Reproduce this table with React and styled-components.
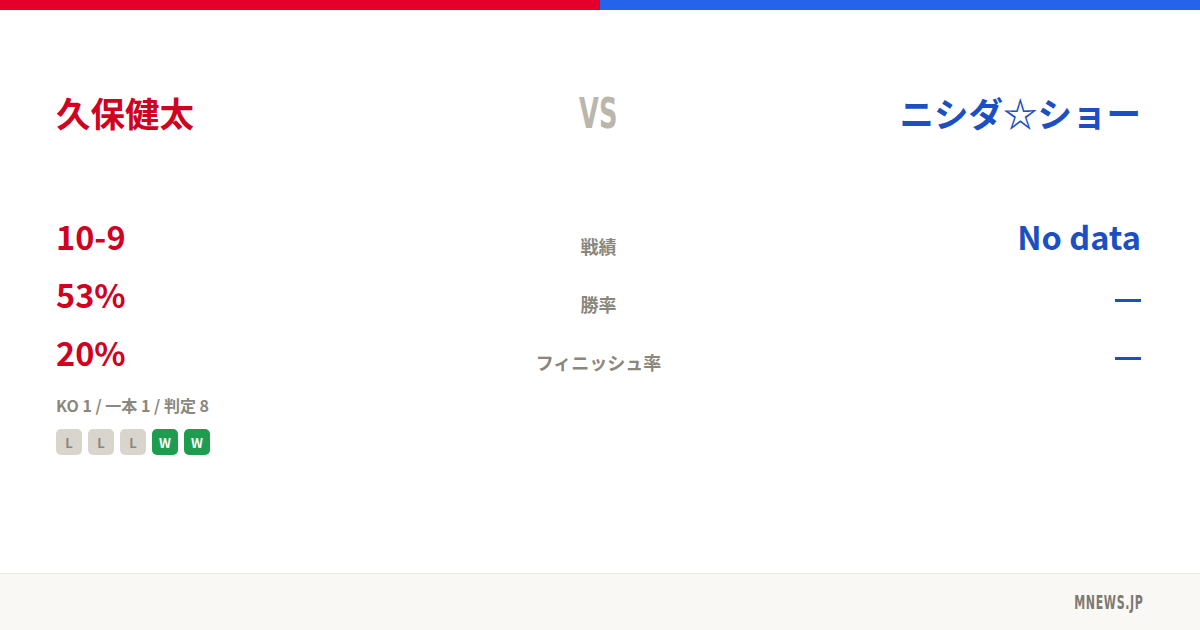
import React from "react";
import styled, { createGlobalStyle } from "styled-components";

const GlobalStyle = createGlobalStyle`
  html, body {
    margin: 0;
    padding: 0;
    background: #ffffff;
  }
  body {
    font-family: "Noto Sans CJK JP", "Noto Sans", sans-serif;
  }
`;

const RED = "#d0021f";
const BLUE = "#1c4fc1";
const MUTED = "#8a877d";

const Card = styled.div`
  width: 1200px;
  height: 630px;
  display: flex;
  flex-direction: column;
  background: #fff;
  overflow: hidden;
`;

const TopBar = styled.div`
  height: 10px;
  display: grid;
  grid-template-columns: 1fr 1fr;
`;

const BarHalf = styled.div`
  background: ${(p) => p.$color};
`;

const Main = styled.div`
  flex: 1;
  padding: 0 59px 0 56px;
  display: flex;
  flex-direction: column;
`;

const Header = styled.div`
  display: grid;
  grid-template-columns: 1fr auto 1fr;
  align-items: center;
  margin-top: 81px;
  height: 40px;
`;

const Name = styled.div`
  font-size: 34.5px;
  font-weight: 700;
  line-height: 1;
  color: ${(p) => p.$color};
  text-align: ${(p) => p.$align};
`;

const Vs = styled.div`
  font-family: "Liberation Sans Narrow", "DejaVu Sans Condensed", sans-serif;
  font-size: 42px;
  font-weight: 700;
  line-height: 1;
  color: #bab6ab;
  transform: scaleX(0.68) translateY(2px);
`;

const Stats = styled.div`
  margin-top: 63px;
  display: grid;
  grid-template-columns: 1fr auto 1fr;
  grid-auto-rows: 58px;
  align-items: end;
`;

const Value = styled.div`
  font-size: 32.5px;
  font-weight: 700;
  line-height: 1;
  color: ${(p) => p.$color};
  text-align: ${(p) => p.$align};
`;

const Label = styled.div`
  font-size: 18px;
  font-weight: 700;
  line-height: 1;
  color: ${MUTED};
  text-align: center;
  margin-bottom: -3px;
`;

const Dash = styled.span`
  display: inline-block;
  width: 26px;
  height: 3px;
  background: ${BLUE};
  margin-bottom: 6px;
`;

const Breakdown = styled.div`
  margin-top: 29px;
  font-size: 16px;
  font-weight: 700;
  color: ${MUTED};
  line-height: 1;
`;

const Form = styled.div`
  display: flex;
  gap: 6px;
  margin-top: 16px;
`;

const Badge = styled.div`
  width: 26px;
  height: 26px;
  border-radius: 5px;
  display: flex;
  align-items: center;
  justify-content: center;
  font-size: 13px;
  font-weight: 700;
  background: ${(p) => (p.$win ? "#1f9d4f" : "#d9d5cc")};
  color: ${(p) => (p.$win ? "#ffffff" : MUTED)};
`;

const Footer = styled.div`
  height: 56px;
  border-top: 1px solid #ebe8e2;
  background: #f9f8f5;
  display: flex;
  align-items: center;
  justify-content: flex-end;
  padding: 0 56px;
`;

const Brand = styled.div`
  font-family: "Liberation Sans Narrow", "DejaVu Sans Condensed", sans-serif;
  font-size: 19px;
  font-weight: 700;
  color: #7d7a71;
  letter-spacing: 1px;
  transform: scaleX(0.645);
  transform-origin: right center;
`;

const rows = [
  { left: "10-9", label: "戦績", right: "No data" },
  { left: "53%", label: "勝率", right: null },
  { left: "20%", label: "フィニッシュ率", right: null },
];

const form = ["L", "L", "L", "W", "W"];

export default function App() {
  return (
    <>
      <GlobalStyle />
      <Card>
        <TopBar>
          <BarHalf $color="#e4002b" />
          <BarHalf $color="#2563eb" />
        </TopBar>
        <Main>
          <Header>
            <Name $color={RED} $align="left">久保健太</Name>
            <Vs>VS</Vs>
            <Name $color={BLUE} $align="right">ニシダ☆ショー</Name>
          </Header>
          <Stats>
            {rows.map((r) => (
              <React.Fragment key={r.label}>
                <Value $color={RED} $align="left">{r.left}</Value>
                <Label>{r.label}</Label>
                <Value $color={BLUE} $align="right">
                  {r.right ? r.right : <Dash />}
                </Value>
              </React.Fragment>
            ))}
          </Stats>
          <Breakdown>KO 1 / 一本 1 / 判定 8</Breakdown>
          <Form>
            {form.map((f, i) => (
              <Badge key={i} $win={f === "W"}>{f}</Badge>
            ))}
          </Form>
        </Main>
        <Footer>
          <Brand>MNEWS.JP</Brand>
        </Footer>
      </Card>
    </>
  );
}
